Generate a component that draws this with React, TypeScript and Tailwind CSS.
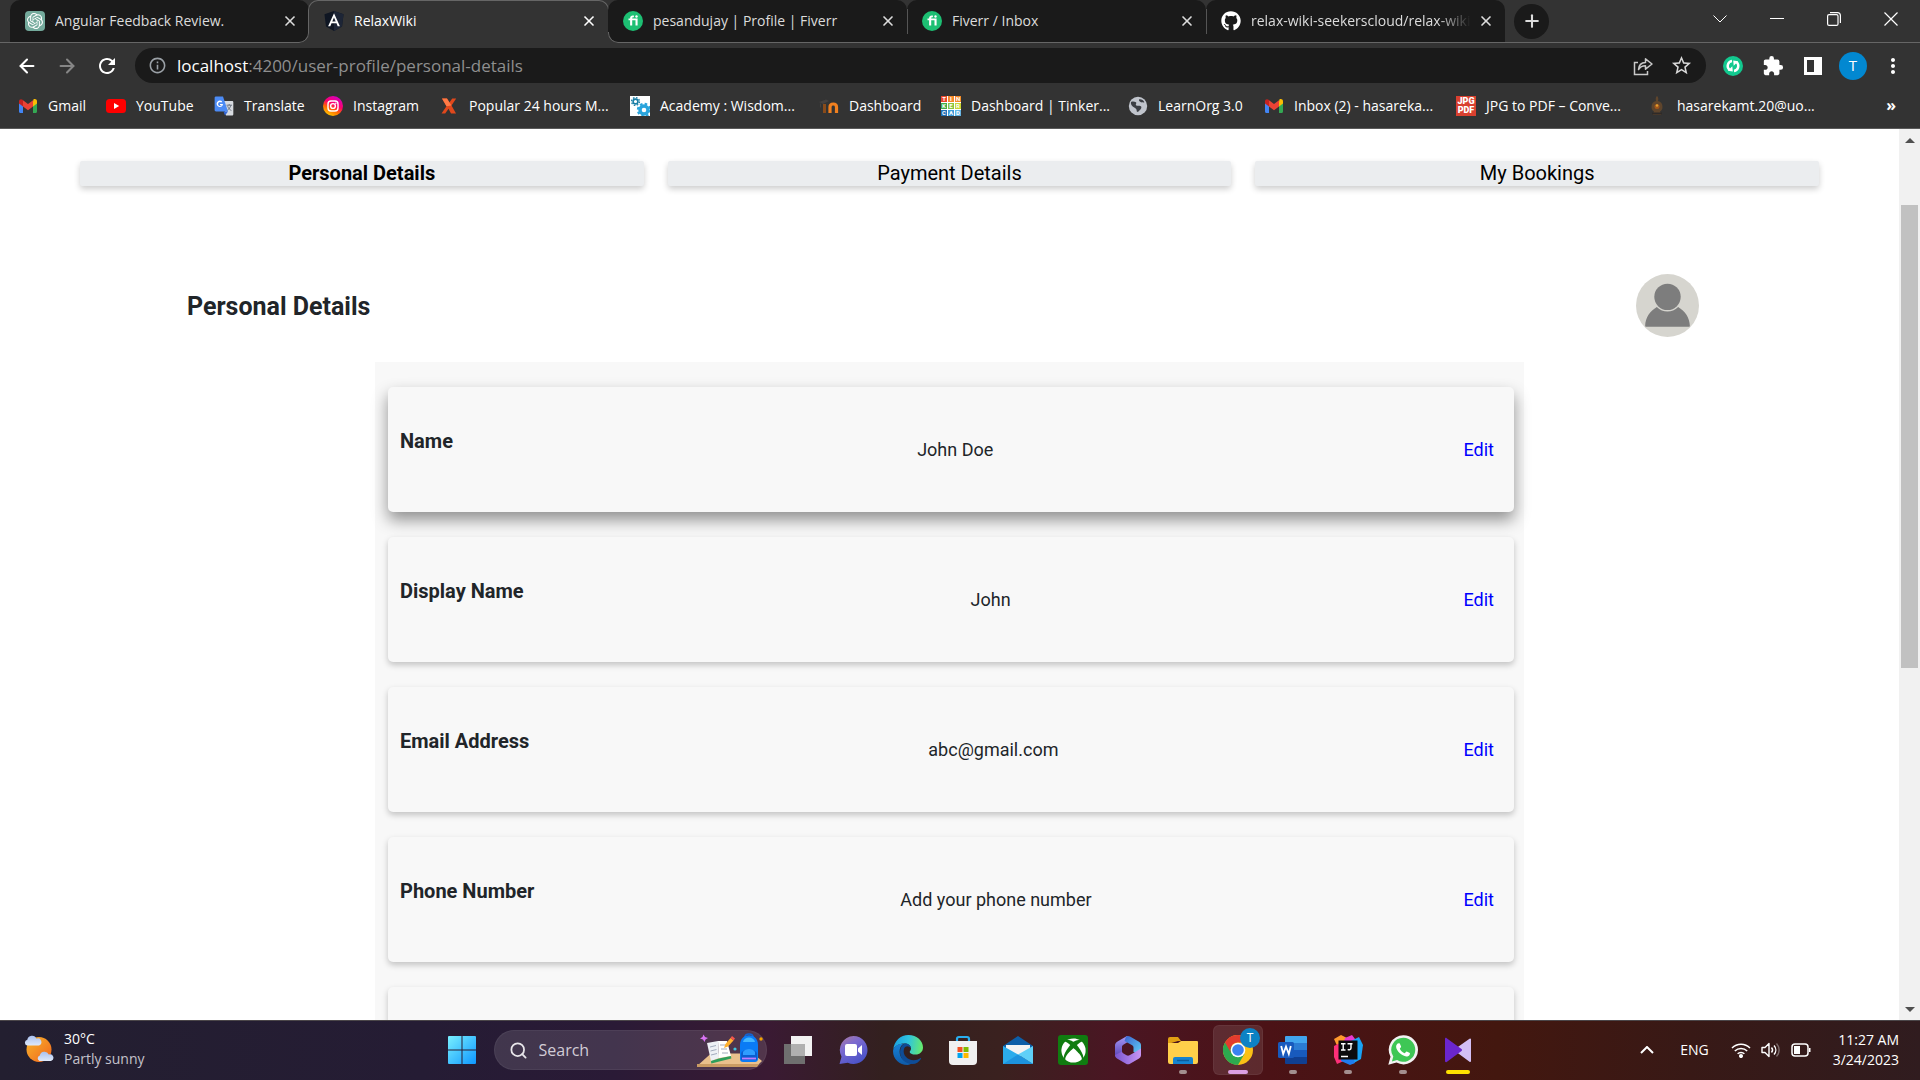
import type { ReactNode } from "react";
import { ArrowLeft, ArrowRight, Plus, Search, X } from "lucide-react";
import { FaGithub, FaXbox } from "react-icons/fa";
import { MdExtension, MdMoreVert, MdRefresh, MdStarBorder, MdInfoOutline } from "react-icons/md";
import { SiOpenai } from "react-icons/si";

/* ---------- favicons ---------- */

const OpenAiIcon = () => (
  <span className="flex size-5 items-center justify-center rounded-[4px] bg-[#74aa9c] text-white">
    <SiOpenai size={16} />
  </span>
);

const AngularIcon = () => (
  <svg viewBox="0 0 20 20" className="size-5">
    <path d="M10 0 19.5 3.3 18 15.6 10 20 2 15.6.5 3.3z" fill="#0f1623" />
    <path d="M10 0 19.5 3.3 18 15.6 10 20z" fill="#1d2536" />
    <path d="M10 2.3 4.1 15.3h2.2l1.2-3h5l1.2 3h2.2zm1.7 8.2H8.3L10 6.4z" fill="#fff" />
  </svg>
);

const FiverrIcon = () => (
  <svg viewBox="0 0 20 20" className="size-5">
    <circle cx="10" cy="10" r="10" fill="#1dbf73" />
    <path
      d="M14.6 14.5h-2.1V9.2H9.2v5.3H7.1V9.2H5.5V7.4h1.6v-.5C7.1 5.400 8.200 4.500 9.700 4.500h1.200v1.700H10c-.5 0-.8.3-.8.8v.4h5.400z"
      fill="#fff"
    />
    <circle cx="13.500" cy="5.500" r="1.200" fill="#fff" />
  </svg>
);

const GmailIcon = () => (
  <svg viewBox="0 0 20 20" className="size-5">
    <path d="M1 5v10.500c0 .8.6 1.500 1.400 1.500H5V8.500z" fill="#4285f4" />
    <path d="M19 5v10.500c0 .8-.6 1.500-1.400 1.500H15V8.500z" fill="#34a853" />
    <path d="M15 5.500v5L19 7.500V5.200C19 3.200 16.800 2.400 15.400 3.500z" fill="#fbbc04" />
    <path d="M5 10.500V4.200l5 3.800 5-3.800v6.300l-5 3.800z" fill="#ea4335" />
    <path d="M1 5.200v2.300l4 3V4.200l-.4-.4C3.200 2.500 1 3.200 1 5.200z" fill="#c5221f" />
  </svg>
);

const YouTubeIcon = () => (
  <svg viewBox="0 0 20 20" className="size-5">
    <rect y="3" width="20" height="14" rx="3.500" fill="#f00" />
    <path d="m8 7 5.200 3L8 13z" fill="#fff" />
  </svg>
);

const TranslateIcon = () => (
  <svg viewBox="0 0 20 20" className="size-5">
    <path d="M8 5h10c.8 0 1.300.5 1.300 1.300v12c0 .8-.5 1.300-1.300 1.300h-6z" fill="#d8dbe0" />
    <path d="M2 .5h7l5 15H2c-.8 0-1.400-.6-1.400-1.400V1.900C.6 1.100 1.200.5 2 .5z" fill="#4c8bf5" />
    <path d="m9.500 15.500h4.500l-3 4z" fill="#3367d6" />
    <path d="M9 8H6v1.200h1.700A2 2 0 1 1 7.300 6.500l.9-.9A3.200 3.200 0 1 0 9 8z" fill="#fff" />
    <path d="M12.500 9.200h5.500M15.200 8v1.200m1.600 0c-.5 2.500-2 4-3.300 5m.2-4c.7 2 2 3.500 3.700 4.300" stroke="#6b7380" fill="none" />
  </svg>
);

const InstagramIcon = () => (
  <svg viewBox="0 0 20 20" className="size-5">
    <defs>
      <linearGradient id="insta" x1="0.200" y1="1" x2="0.700" y2="0">
        <stop offset="0" stopColor="#ffd600" />
        <stop offset="0.350" stopColor="#ff6a00" />
        <stop offset="0.600" stopColor="#ff0169" />
        <stop offset="1" stopColor="#d300c5" />
      </linearGradient>
    </defs>
    <circle cx="10" cy="10" r="10" fill="url(#insta)" />
    <rect x="5" y="5" width="10" height="10" rx="3" fill="none" stroke="#fff" strokeWidth="1.400" />
    <circle cx="10" cy="10" r="2.400" fill="none" stroke="#fff" strokeWidth="1.400" />
    <circle cx="12.800" cy="7.200" r=".8" fill="#fff" />
  </svg>
);

const XIcon = () => (
  <svg viewBox="0 0 20 20" className="size-5">
    <path d="M3 2.500h5l2.200 4.300 3-4.300h4L12.500 9.500l4.500 8h-5l-2.500-4.700-3.300 4.700H2.500l5-7.300z" fill="#e0481c" />
    <path d="M7.500 10.200 3 2.500h5l4.500 7z" fill="#ff7a45" />
  </svg>
);

const GearsIcon = () => (
  <svg viewBox="0 0 20 20" className="size-5">
    <rect width="20" height="20" fill="#fff" />
    <circle cx="5.500" cy="5.500" r="2.400" fill="none" stroke="#1b7fa6" strokeWidth="1.600" />
    <circle cx="5.500" cy="5.500" r="3.900" fill="none" stroke="#1b7fa6" strokeWidth="1.400" strokeDasharray="1.600 1.460" />
    <circle cx="14" cy="14" r="4" fill="none" stroke="#29a4dc" strokeWidth="3.400" />
    <circle cx="14" cy="14" r="6.200" fill="none" stroke="#29a4dc" strokeWidth="2" strokeDasharray="2.600 2.260" />
  </svg>
);

const MoodleIcon = () => (
  <svg viewBox="0 0 20 20" className="size-5">
    <path d="M0 6 7 3.500l3 1.500-6 3z" fill="#454140" />
    <path d="M1.500 7.500v4" stroke="#454140" />
    <path d="M5.500 8v9" stroke="#8a4b1a" strokeWidth="3" />
    <path d="M11 17v-6c0-4 6.500-4 6.500 0v6" stroke="#f08020" strokeWidth="3.200" fill="none" />
  </svg>
);

const tiles = [
  ["T", "#e8472b"], ["I", "#f5882a"], ["N", "#f5882a"],
  ["K", "#3fae49"], ["E", "#8bc53f"], ["R", "#c9d534"],
  ["C", "#1f6fb5"], ["A", "#3d9bd9"], ["D", "#62b5e5"],
];

const TinkercadIcon = () => (
  <span aria-hidden="true" className="grid size-5 grid-cols-3 grid-rows-3 gap-px overflow-hidden bg-white text-center font-['Roboto'] text-[6px] leading-[6px] font-bold text-white">
    {tiles.map(([letter, color]) => (
      <span key={letter} style={{ backgroundColor: color }}>{letter}</span>
    ))}
  </span>
);

const GlobeIcon = () => (
  <svg viewBox="0 0 20 20" className="size-5">
    <circle cx="10" cy="10" r="9.200" fill="#c0c4cc" />
    <path d="M3 6c2-.8 3.500-.2 5 .2 1 1.300-1 2 .3 3.200 1.500.8 4-.4 5 1.300.6 2-1.500 2.800-2.600 4.600-.8 1-2 .9-2-.5 0-2-1.300-2.500-2.500-3.300C4.600 10.500 2.500 9 3 6zM11 3.500c2-.6 4.500.8 5.400 2.700-1.200.6-2.200-.2-3.200.2-1.200-.7-2.600-1.500-2.200-2.900z" fill="#3b3e44" />
  </svg>
);

const JpgPdfIcon = () => (
  <span aria-hidden="true" className="flex size-5 flex-col justify-center bg-[#d9402f] text-center font-['Roboto'] text-[9px] leading-[9px] font-black text-white">
    <span>JPG</span>
    <span>PDF</span>
  </span>
);

const CrestIcon = () => (
  <svg viewBox="0 0 20 20" className="size-5">
    <path d="M10 0c1.500 1 1.500 3 1 5 3 .5 4.500 3 4.500 6 0 2-1 3.500-2.500 4.500l1.500 3.500h-9L7 15.500C5.500 14.500 4.500 13 4.500 11c0-3 1.500-5.500 4.500-6-.5-2-.5-4 1-5z" fill="#5f452c" />
    <circle cx="10" cy="10.500" r="2.500" fill="#a3561a" />
    <circle cx="10" cy="9.500" r="1.200" fill="#e0a030" />
    <path d="M5 16.500h10v2H5z" fill="#2e2a28" />
  </svg>
);

/* ---------- browser chrome ---------- */

const tabs: { title: string; icon: ReactNode }[] = [
  { title: "Angular Feedback Review.", icon: <OpenAiIcon /> },
  { title: "RelaxWiki", icon: <AngularIcon /> },
  { title: "pesandujay | Profile | Fiverr", icon: <FiverrIcon /> },
  { title: "Fiverr / Inbox", icon: <FiverrIcon /> },
  { title: "relax-wiki-seekerscloud/relax-wiki", icon: <FaGithub size={20} color="#fff" /> },
];

const ACTIVE = 1;

function tabShape(i: number) {
  if (i === ACTIVE) return "bg-[#333333] text-white";
  if (i === ACTIVE - 1) return "rounded-t-[10px] rounded-br-[10px] bg-[#1a1a1a] text-[#dcdcdc]";
  if (i === ACTIVE + 1) return "rounded-t-[10px] rounded-bl-[10px] bg-[#1a1a1a] text-[#dcdcdc]";
  return "rounded-t-[10px] bg-[#1a1a1a] text-[#dcdcdc]";
}

function TabStrip() {
  return (
    <div className="flex h-[43px] shrink-0 bg-[#333333]">
      <div className="w-[10px] shrink-0 border-b border-[#666666]" />
      {tabs.map((t, i) => (
        <div key={t.title} className={`relative flex w-[299px] min-w-0 items-center pr-[10px] pb-[2px] pl-[15px] ${tabShape(i)}`}>
          {i === ACTIVE && (
            <span className="absolute -inset-x-px top-0 bottom-[10px] rounded-t-[10px] border-x border-t border-[#666666]" />
          )}
          {i === ACTIVE - 1 && (
            <span className="absolute inset-x-0 bottom-0 h-[11px] rounded-br-[10px] border-r border-b border-[#666666]" />
          )}
          {i === ACTIVE + 1 && (
            <span className="absolute inset-x-0 bottom-0 h-[11px] rounded-bl-[10px] border-b border-l border-[#666666]" />
          )}
          {i > ACTIVE + 1 && (
            <>
              <span className="absolute inset-x-0 bottom-0 border-b border-[#666666]" />
              <span className="absolute top-[9px] bottom-[9px] left-0 border-l border-[#555555]" />
            </>
          )}
          <button className="flex min-w-0 flex-1 items-center gap-[10px] text-left">
            <span className="shrink-0">{t.icon}</span>
            <span
              className={`flex-1 overflow-hidden text-sm whitespace-nowrap ${
                i === 4 ? "[mask-image:linear-gradient(90deg,#000_85%,transparent)]" : ""
              }`}
            >
              {t.title}
            </span>
          </button>
          <button aria-label={`Close ${t.title}`} className="ml-[6px] flex size-[18px] items-center justify-center">
            <X size={16} strokeWidth={2.5} />
          </button>
        </div>
      ))}
      <div className="flex flex-1 items-center border-b border-[#666666] pr-px pl-[9px]">
        <button aria-label="New tab" className="flex size-[35px] items-center justify-center rounded-full bg-[#1a1a1a] text-[#dcdcdc]">
          <Plus size={20} strokeWidth={2.5} />
        </button>
        <div className="ml-auto flex h-[38px] self-start text-white">
          <button aria-label="Search tabs" className="flex w-[57px] items-center justify-center">
            <svg viewBox="0 0 14 8" className="h-2 w-[14px]" fill="none" stroke="currentColor"><path d="m.5.500 6.500 6.500L13.500.5" /></svg>
          </button>
          <button aria-label="Minimize" className="flex w-[57px] items-center justify-center">
            <svg viewBox="0 0 14 2" className="h-[2px] w-[14px]"><path d="M0 0h14v1H0z" fill="currentColor" /></svg>
          </button>
          <button aria-label="Restore" className="flex w-[57px] items-center justify-center">
            <svg viewBox="0 0 14 14" className="size-[14px]" fill="none" stroke="currentColor" strokeWidth="1.200">
              <rect x=".6" y="2.600" width="10.400" height="10.800" rx="1.500" />
              <path d="M3 .6h7.500a3 3 0 0 1 2.900 2.900V11" />
            </svg>
          </button>
          <button aria-label="Close window" className="flex w-[57px] items-center justify-center">
            <svg viewBox="0 0 14 14" className="size-[14px]" fill="none" stroke="currentColor" strokeWidth="1.200"><path d="m.5.500 13 13M13.500.5l-13 13" /></svg>
          </button>
        </div>
      </div>
    </div>
  );
}

function Toolbar() {
  const btn = "flex w-10 shrink-0 items-center justify-center";
  return (
    <div className="flex h-[45px] shrink-0 items-center bg-[#333333] px-[7px] text-white">
      <button aria-label="Back" className={btn}><ArrowLeft size={22} strokeWidth={2.250} /></button>
      <button aria-label="Forward" className={`${btn} text-[#868686]`}><ArrowRight size={22} strokeWidth={2.250} /></button>
      <button aria-label="Reload" className={btn}><MdRefresh size={24} /></button>
      <div className="mr-[7px] ml-2 flex h-[35px] flex-1 items-center rounded-full bg-[#1a1a1a] pr-[5px] pl-[13px]">
        <button aria-label="Site information" className="text-[#9aa0a6]"><MdInfoOutline size={19} /></button>
        <label className="ml-[10px] flex flex-1 items-center text-[17px]">
          <span>localhost</span>
          <input aria-label="Address" className="min-w-0 flex-1 bg-transparent text-[#8f8f8f] outline-none" defaultValue=":4200/user-profile/personal-details" />
        </label>
        <button aria-label="Share" className="flex w-[39px] justify-center text-[#c8c8c8]">
          <svg viewBox="0 0 20 20" className="size-5" fill="none" stroke="currentColor" strokeWidth="1.500">
            <path d="M5 6.500H1.500v12h13V15" />
            <path d="M5.500 13.500c.3-4.500 2.700-6.800 7-7V2.800L19 8l-6.500 5.200V9.700c-3.300 0-5.400 1.200-7 3.800z" strokeLinejoin="round" />
          </svg>
        </button>
        <button aria-label="Bookmark this page" className="flex w-[39px] justify-center text-[#d8d8d8]"><MdStarBorder size={23} /></button>
      </div>
      <button aria-label="Sync extension" className={btn}>
        <svg viewBox="0 0 20 20" className="size-5">
          <circle cx="10" cy="10" r="10" fill="#12c98f" />
          <path d="M9 5A5 5 0 0 0 6.500 13.800" stroke="#fff" strokeWidth="2.400" fill="none" />
          <path d="M11 15A5 5 0 0 0 13.500 6.200" stroke="#fff" strokeWidth="2.400" fill="none" />
          <path d="m4.800 14.800 5 .6L9.300 10.300zM15.200 5.200l-5-.6.500 5.100z" fill="#fff" />
        </svg>
      </button>
      <button aria-label="Extensions" className={btn}><MdExtension size={22} /></button>
      <button aria-label="Side panel" className={btn}>
        <svg viewBox="0 0 18 18" className="size-[18px]"><path d="M0 0h18v18H0zM3 3v12h7V3z" fill="#fff" fillRule="evenodd" /></svg>
      </button>
      <button aria-label="Profile" className={btn}>
        <span className="flex size-7 items-center justify-center rounded-full bg-[#0288d1] text-[15px]">T</span>
      </button>
      <button aria-label="Menu" className={btn}><MdMoreVert size={24} /></button>
    </div>
  );
}

const bookmarks: { label: string; icon: ReactNode; width: string }[] = [
  { label: "Gmail", icon: <GmailIcon />, width: "w-[88px]" },
  { label: "YouTube", icon: <YouTubeIcon />, width: "w-[108px]" },
  { label: "Translate", icon: <TranslateIcon />, width: "w-[109px]" },
  { label: "Instagram", icon: <InstagramIcon />, width: "w-[116px]" },
  { label: "Popular 24 hours M...", icon: <XIcon />, width: "w-[191px]" },
  { label: "Academy : Wisdom...", icon: <GearsIcon />, width: "w-[189px]" },
  { label: "Dashboard", icon: <MoodleIcon />, width: "w-[122px]" },
  { label: "Dashboard | Tinker...", icon: <TinkercadIcon />, width: "w-[187px]" },
  { label: "LearnOrg 3.0", icon: <GlobeIcon />, width: "w-[136px]" },
  { label: "Inbox (2) - hasareka...", icon: <GmailIcon />, width: "w-[192px]" },
  { label: "JPG to PDF – Conve...", icon: <JpgPdfIcon />, width: "w-[191px]" },
  { label: "hasarekamt.20@uo...", icon: <CrestIcon />, width: "w-[180px]" },
];

function Bookmarks() {
  return (
    <nav aria-label="Bookmarks" className="flex h-[41px] shrink-0 items-center border-b border-[#5a5a5a] bg-[#333333] pb-1 pl-[18px] text-sm text-white">
      {bookmarks.map((b, i) => (
        <a key={i} href="#" className={`flex shrink-0 items-center gap-[10px] whitespace-nowrap ${b.width}`}>
          <span className="shrink-0">{b.icon}</span>
          {b.label}
        </a>
      ))}
      <button aria-label="More bookmarks" className="mr-[24px] ml-auto pb-[3px] text-base font-bold">»</button>
    </nav>
  );
}

/* ---------- web page ---------- */

const sections = ["Personal Details", "Payment Details", "My Bookings"];

const details = [
  { label: "Name", value: "John Doe" },
  { label: "Display Name", value: "John" },
  { label: "Email Address", value: "abc@gmail.com" },
  { label: "Phone Number", value: "Add your phone number" },
];

function ProfilePage() {
  return (
    <main className="min-w-0 flex-1 overflow-hidden bg-white px-20 pt-8 font-['Roboto',sans-serif] text-[#212529]">
      <nav aria-label="Profile sections" className="grid grid-cols-3 gap-6">
        {sections.map((s, i) => (
          <a
            key={s}
            href="#"
            className={`rounded-[2px] bg-[#ebedef] text-center text-xl leading-[25px] text-black shadow-[0_3px_6px_rgba(0,0,0,0.2)] ${i === 0 ? "font-bold" : ""}`}
          >
            {s}
          </a>
        ))}
      </nav>

      <header className="mt-[88px] flex items-center justify-between pr-[120px] pl-[107px]">
        <h1 className="pt-[2px] text-[25px] leading-8 font-bold">Personal Details</h1>
        <svg viewBox="0 0 62 62" className="size-[63px]" role="img" aria-label="Profile picture">
          <circle cx="31" cy="31" r="31" fill="#d6d5cf" />
          <path d="M9 51c.3-8 4.800-14.500 11.500-18.500 6 6 15 6 21 0C48.200 36.500 52.700 43 53 51c0 .8-.4 1-1 1H10c-.6 0-1-.2-1-1z" fill="#7d7d7d" />
          <circle cx="31" cy="22.500" r="13" fill="#7d7d7d" />
        </svg>
      </header>

      <section className="mx-[295px] mt-[25px] flex flex-col gap-[25px] bg-[#f8f8f8] pt-[25px] pr-[10px] pb-[25px] pl-[13px]">
        {details.map((d, i) => (
          <article
            key={d.label}
            className={`flex h-[125px] shrink-0 items-center justify-between rounded-[5px] bg-[#f8f8f8] pr-[14px] pl-3 ${
              i === 0 ? "shadow-[0_8px_16px_rgba(0,0,0,0.42)]" : "shadow-[0_3px_6px_rgba(0,0,0,0.22)]"
            }`}
          >
            <h2 className="pb-[18px] text-xl leading-6 font-bold">{d.label}</h2>
            <p className="text-lg">{d.value}</p>
            <button aria-label={`Edit ${d.label}`} className="px-[6px] text-lg text-[#0000ff]">Edit</button>
          </article>
        ))}
        <article className="h-[125px] shrink-0 rounded-[5px] bg-[#f8f8f8] shadow-[0_3px_6px_rgba(0,0,0,0.22)]" />
      </section>
    </main>
  );
}

function Scrollbar() {
  return (
    <div className="flex w-[21px] shrink-0 flex-col items-center bg-[#f1f1f1]">
      <button aria-label="Scroll up" className="flex h-[22px] w-full items-center justify-center">
        <svg viewBox="0 0 10 5" className="h-[5px] w-[10px]"><path d="M0 5 5 0l5 5z" fill="#505050" /></svg>
      </button>
      <div className="flex-1 pt-[54px]">
        <div className="h-[463px] w-[17px] bg-[#c1c1c1]" />
      </div>
      <button aria-label="Scroll down" className="flex h-[22px] w-full items-center justify-center">
        <svg viewBox="0 0 10 5" className="h-[5px] w-[10px]"><path d="m0 0 5 5 5-5z" fill="#505050" /></svg>
      </button>
    </div>
  );
}

/* ---------- taskbar ---------- */

const Icon = ({ children }: { children: ReactNode }) => (
  <svg viewBox="0 0 30 30" className="size-[30px]">{children}</svg>
);

const WeatherIcon = () => (
  <svg viewBox="0 0 30 30" className="size-[30px]">
    <defs>
      <linearGradient id="sun" x1="0" y1="0" x2="1" y2="1">
        <stop offset="0" stopColor="#f8b62b" />
        <stop offset="1" stopColor="#f0641e" />
      </linearGradient>
      <linearGradient id="cloud" x1="0" y1="0" x2="0" y2="1">
        <stop offset="0" stopColor="#a9c1f0" />
        <stop offset="1" stopColor="#dfe9fa" />
      </linearGradient>
    </defs>
    <circle cx="15" cy="15.500" r="12.500" fill="url(#sun)" />
    <path d="M3 11.500a3 3 0 0 1 .3-5.800 4.800 4.800 0 0 1 9.200-1 3.500 3.500 0 0 1 2.500 6.800z" fill="url(#cloud)" />
    <path d="M15.500 27a3 3 0 0 1 .3-5.600 4.800 4.800 0 0 1 9-1 3.400 3.400 0 0 1 2.200 6.600z" fill="url(#cloud)" />
  </svg>
);

const StartIcon = () => (
  <Icon>
    <defs>
      <linearGradient id="win" x1="0" y1="0" x2="30" y2="30" gradientUnits="userSpaceOnUse">
        <stop offset="0" stopColor="#7df3ff" />
        <stop offset="1" stopColor="#0a93ff" />
      </linearGradient>
    </defs>
    <path d="M2 1h12.500v13.500H1V2a1 1 0 0 1 1-1zM15.500 1H28a1 1 0 0 1 1 1v12.500H15.500zM1 15.500h13.500V29H2a1 1 0 0 1-1-1zM15.500 15.500H29V28a1 1 0 0 1-1 1H15.500z" fill="url(#win)" />
  </Icon>
);

const StudyIllustration = () => (
  <svg viewBox="0 0 66 34" className="h-[34px] w-[66px]">
    <path d="M14 20.500h42L65 28l-5 5H0z" fill="#e9c08c" />
    <path d="M0 31h62l-2 3H0z" fill="#c99b63" />
    <path d="m10 10 11-2 1 17-8 3z" fill="#eef0f5" />
    <path d="m21 8 9 0 4 15-12 2z" fill="#fff" />
    <path d="m14 28 8-2.500 12-2.500.3 2.500-20 5z" fill="#2e9e5b" />
    <path d="m13 14 6-1.500M13.500 18l6-1.500M14 22l6-1.500M23 12h6M24 16h6M25 20h6" stroke="#9aa3b5" strokeWidth=".9" />
    <path d="m27 15 1.500-4 5-6 3 2.500-5.500 6z" fill="#ffb02e" />
    <path d="m33.500 5 1.500-2 3 2.500-1.500 2z" fill="#f4574d" />
    <path d="M6.500 1.500 8 4l3 1-2.500 1.500L7.500 9 6 6.500 3 5.500 5.500 4z" fill="#d974f5" />
    <circle cx="38" cy="16" r="1.600" fill="#3fc3e0" />
    <circle cx="64" cy="6" r="1.700" fill="#f5a300" />
    <path d="M48 4c0-4 8-4 8 0" stroke="#1464d2" strokeWidth="1.600" fill="none" />
    <path d="M43 12c0-13 18-13 18 0v14c0 2-1.500 3-3 3H46c-2 0-3-1-3-3z" fill="#0a7bf5" />
    <path d="M46 9c1-6 11-6 12 0z" fill="#43b7ff" />
    <path d="M44 21c0-6 16-6 16 0v6H44z" fill="#0b5ed1" />
    <path d="M46 19c2-4 10-4 12 0v3H46z" fill="#2f9dff" />
    <path d="M45 25.500h14" stroke="#c17bff" strokeWidth="1.800" />
  </svg>
);

const TaskViewIcon = () => (
  <Icon>
    <path d="M8 1h21v20H8z" fill="#f2f2f2" />
    <path d="M1 9h21v20H1z" fill="#6f6f6f" />
    <path d="M8 9h14v12H8z" fill="#b0b0b0" />
  </Icon>
);

const ChatIcon = () => (
  <Icon>
    <defs>
      <linearGradient id="chat" x1="0" y1="0" x2=".6" y2="1">
        <stop offset="0" stopColor="#b07a9c" />
        <stop offset=".4" stopColor="#7c6ad0" />
        <stop offset="1" stopColor="#4b53c9" />
      </linearGradient>
    </defs>
    <path d="M15.500 1a14 14 0 1 1-5.700 26.800L1.500 29l2-7.300A14 14 0 0 1 15.500 1z" fill="url(#chat)" />
    <rect x="7" y="9" width="12" height="12" rx="2" fill="#fff" />
    <path d="m20 13.500 4-3.500v10l-4-3.500z" fill="#fff" />
  </Icon>
);

const EdgeIcon = () => (
  <Icon>
    <defs>
      <linearGradient id="edgeA" x1="0" y1=".3" x2="1" y2=".4">
        <stop offset="0" stopColor="#1a9fe0" />
        <stop offset=".5" stopColor="#2fc3df" />
        <stop offset="1" stopColor="#66eb6e" />
      </linearGradient>
      <linearGradient id="edgeB" x1="0" y1="0" x2="0" y2="1">
        <stop offset="0" stopColor="#1683d8" />
        <stop offset="1" stopColor="#0f5aa8" />
      </linearGradient>
    </defs>
    <path d="M.3 14.500C1 6 7.500 0 15.500 0 24 0 30 6 30 12.500c0 4.300-3.300 7-7.300 7-3.700 0-6-1.300-6-2.600 0-.9 1.300-1.400 1.300-3.500 0-2.900-2.900-5-6.400-5C6 8.400 1.500 11 .3 14.500z" fill="url(#edgeA)" />
    <path d="M.1 15.500c.6-4.300 5.300-7.100 11-7.100-3.400 1.800-4.500 5-4.500 8.100C6.600 24 13 28.500 20 27.500c-1.800 1.500-3.800 2.500-5.500 2.500C6 30-.5 23.500.1 15.500z" fill="url(#edgeB)" />
    <path d="M11 14c-1.800 6 3.500 11.200 9.700 11.200 2.600 0 4.600-.8 6.500-2 .6-.4 1 .2.700.7C26 27 23 29 19.500 29 12 29 7 23.500 7 17c0-3.500 1.500-7 4.600-8.500 3.500 0 6.400 2 6.400 4.900C16 10.500 12 10.500 11 14z" fill="#0e4c96" />
  </Icon>
);

const StoreIcon = () => (
  <Icon>
    <path d="M9 7V4a2 2 0 0 1 2-2h8a2 2 0 0 1 2 2v3" fill="none" stroke="#29aef0" strokeWidth="2.200" />
    <path d="M1 6h28v20a4 4 0 0 1-4 4H5a4 4 0 0 1-4-4z" fill="#f0f0f0" />
    <path d="M9.500 12h5v5h-5z" fill="#f25022" />
    <path d="M15.500 12h5v5h-5z" fill="#7fba00" />
    <path d="M9.500 18h5v5h-5z" fill="#00a4ef" />
    <path d="M15.500 18h5v5h-5z" fill="#ffb900" />
  </Icon>
);

const MailIcon = () => (
  <Icon>
    <path d="M0 11 15 1l15 10v6H0z" fill="#0c5ea8" />
    <path d="M3 10h24v6L15 22 3 16z" fill="#f3f3f3" />
    <path d="M0 11v18h30L15 19.500z" fill="#2bacec" />
    <path d="M30 11v18L15 19.500z" fill="#5fd0f8" />
    <path d="M0 29 15 19.500 30 29z" fill="#1d93de" />
  </Icon>
);

const XboxIcon = () => (
  <span className="flex size-[30px] items-center justify-center rounded-[3px] bg-[#107c10] text-white">
    <FaXbox size={25} />
  </span>
);

const M365Icon = () => (
  <Icon>
    <defs>
      <linearGradient id="m365a" x1="0" y1="0" x2="0" y2="1">
        <stop offset="0" stopColor="#a79af5" />
        <stop offset="1" stopColor="#5b45b8" />
      </linearGradient>
      <linearGradient id="m365b" x1="0" y1="0" x2="1" y2="1">
        <stop offset="0" stopColor="#3b62cf" />
        <stop offset="1" stopColor="#62d4f7" />
      </linearGradient>
      <linearGradient id="m365c" x1="0" y1="0" x2="1" y2="0">
        <stop offset="0" stopColor="#7a56cf" />
        <stop offset="1" stopColor="#c795f5" />
      </linearGradient>
    </defs>
    <path d="M14 1 4.500 6.500C3 7.400 2 8.800 2 10.500v11l7-3.500v-6c0-1 .5-1.800 1.300-2.300L18 5z" fill="url(#m365a)" />
    <path d="M13 1.500c1.300-.8 2.700-.8 4 0l9 5.200c1.300.8 2 2 2 3.500V20l-7.500-3v-4.500c0-1-.5-1.800-1.300-2.300L11.500 6z" fill="url(#m365b)" />
    <path d="M2 20 9 16.500c.2 1 .7 1.600 1.500 2l3 1.800c1 .5 2 .5 3 0l4-2.300 7.500-4.500V20c0 1.500-.7 2.700-2 3.500l-9 5.200c-1.300.7-2.700.7-4 0l-9-5.200C2.700 22.700 2 21.500 2 20z" fill="url(#m365c)" />
  </Icon>
);

const ExplorerIcon = () => (
  <Icon>
    <path d="M0 4a2 2 0 0 1 2-2h8l3 4h-3L0 9z" fill="#e0a013" />
    <path d="M0 8h10l3-2h16a1 1 0 0 1 1 1v20a2 2 0 0 1-2 2H2a2 2 0 0 1-2-2z" fill="#ffd04a" />
    <path d="M5 29v-5a2 2 0 0 1 2-2h16a2 2 0 0 1 2 2v5z" fill="#1583d0" />
    <path d="M9 25.500h12" stroke="#0c5c9c" strokeWidth="1.400" />
  </Icon>
);

const ChromeIcon = () => (
  <span className="relative">
    <Icon>
      <circle cx="15" cy="15" r="15" fill="#fbc116" />
      <path d="M15 15 2 7.500A15 15 0 0 0 15 30l6.500-11.200z" fill="#2da94f" />
      <path d="M2 7.500A15 15 0 0 1 28 7.500H15A7.500 7.500 0 0 0 8.500 18.800z" fill="#e33b2e" />
      <circle cx="15" cy="15" r="7.300" fill="#fff" />
      <circle cx="15" cy="15" r="5.800" fill="#3b82f0" />
    </Icon>
    <span className="absolute -top-[7px] -right-[7px] flex size-5 items-center justify-center rounded-full bg-[#0c82c4] text-xs text-white">T</span>
  </span>
);

const WordIcon = () => (
  <Icon>
    <path d="M8 1h20a1 1 0 0 1 1 1v6H7V2a1 1 0 0 1 1-1z" fill="#41a5ee" />
    <path d="M7 8h22v7H7z" fill="#2b7cd3" />
    <path d="M7 15h22v7H7z" fill="#185abd" />
    <path d="M7 22h22v6a1 1 0 0 1-1 1H8a1 1 0 0 1-1-1z" fill="#103f91" />
    <rect x="0" y="7" width="16" height="16" rx="1.500" fill="#185abd" />
    <path d="m3.200 11 2 8 2.800-7.500L10.800 19l2-8" stroke="#fff" strokeWidth="1.800" fill="none" />
  </Icon>
);

const IntelliJIcon = () => (
  <Icon>
    <path d="m1 4 7-4 6 3-8 12z" fill="#ff9a2e" />
    <path d="M12 3 19 0l6 8-3 8H8z" fill="#e83ad0" />
    <path d="m18 6 8-4 4 8-2 14-9 5z" fill="#18a3f5" />
    <path d="m1 11 8-4 4 18-9 4-3-7z" fill="#fe2f78" />
    <path d="m8 20 12 2 2 6-5 2-9-4z" fill="#1f7df0" />
    <path d="M5.500 5.500h19v19h-19z" fill="#0b0b0d" />
    <path d="M8 21.500h7" stroke="#fff" strokeWidth="1.500" />
    <path d="M8 8.700h4.500M10.200 8.700V15M8 15h4.500M14.500 8.700h5M18 8.700V13c0 1.700-1.800 2.200-3.300 1.300" stroke="#fff" strokeWidth="1.400" fill="none" />
  </Icon>
);

const WhatsAppIcon = () => (
  <Icon>
    <path d="M15.300.3A14.500 14.500 0 0 1 30 14.800 14.500 14.500 0 0 1 8.500 27.600L.3 29.800l2.200-8A14.500 14.500 0 0 1 15.300.3z" fill="#f3f3f3" />
    <path d="M15.300 2.800a12 12 0 1 1-6.200 22.300l-5.200 1.300 1.400-5A12 12 0 0 1 15.300 2.800z" fill="#3ec755" />
    <path d="M10.800 8.300c.5 0 .9 0 1.200.7l1.100 2.600c.2.600-1.200 1.900-1.300 2.200 1 2 2.700 3.500 4.900 4.500.4-.1 1.500-1.900 2-1.800l2.700 1.300c.6.300.6.500.5 1.100-.4 1.900-2.100 2.600-3.600 2.600-4.300-.2-10.200-5.600-10.200-9.900 0-1.400 1-3.300 2.700-3.300z" fill="#fff" />
  </Icon>
);

const KiteIcon = () => (
  <Icon>
    <path d="M28 4v22a1 1 0 0 1-1.500.8L12 16v-2L26.500 3.700A1 1 0 0 1 28 4z" fill="#d3bff5" />
    <path d="M2 4v22c0 1 .8 1.500 1.700.9L18.500 16c.7-.5.7-1.500 0-2L3.700 3.200C2.800 2.500 2 3 2 4z" fill="#6a26cd" />
  </Icon>
);

const apps: { name: string; icon: ReactNode; bar?: string; active?: boolean }[] = [
  { name: "Task view", icon: <TaskViewIcon /> },
  { name: "Chat", icon: <ChatIcon /> },
  { name: "Edge", icon: <EdgeIcon /> },
  { name: "Store", icon: <StoreIcon /> },
  { name: "Mail", icon: <MailIcon /> },
  { name: "Xbox", icon: <XboxIcon /> },
  { name: "Microsoft 365", icon: <M365Icon /> },
  { name: "File Explorer", icon: <ExplorerIcon />, bar: "w-2 bg-[#a38f8f]" },
  { name: "Chrome", icon: <ChromeIcon />, bar: "w-5 bg-[#dc9fe2]", active: true },
  { name: "Word", icon: <WordIcon />, bar: "w-2 bg-[#a38f8f]" },
  { name: "IntelliJ IDEA", icon: <IntelliJIcon />, bar: "w-2 bg-[#a38f8f]" },
  { name: "WhatsApp", icon: <WhatsAppIcon />, bar: "w-2 bg-[#a38f8f]" },
  { name: "Visual Studio", icon: <KiteIcon />, bar: "w-6 bg-[#ffe100]" },
];

function Taskbar() {
  return (
    <footer className="grid h-[60px] shrink-0 grid-cols-[1fr_auto_1fr] items-center border-t border-[#4b4649] bg-[linear-gradient(90deg,#231f30_0%,#251c34_22%,#2a1a36_32%,#3a1a33_40%,#33201f_46%,#3a211f_52%,#4a1623_58%,#4b1216_66%,#43170f_78%,#381916_88%,#301c1f_100%)] pb-px text-white">
      <button className="flex items-center gap-[10px] pb-[2px] pl-[24px] text-left text-sm leading-5">
        <WeatherIcon />
        <span>
          <span className="block">30°C</span>
          <span className="block text-[#c5c2cb]">Partly sunny</span>
        </span>
      </button>

      <div className="flex h-full items-center">
        <button aria-label="Start" className="flex w-[55px] justify-center"><StartIcon /></button>
        <label className="mx-[4px] flex h-10 w-[273px] items-center rounded-full border border-white/5 bg-white/12 pr-[3px] pl-[14px]">
          <Search size={19} strokeWidth={2.250} className="text-[#e8e6ea]" />
          <input aria-label="Search" placeholder="Search" className="ml-[11px] min-w-0 flex-1 bg-transparent text-base outline-none placeholder:text-[#d2ccd6]" />
          <StudyIllustration />
        </label>
        {apps.map((a) => (
          <button key={a.name} aria-label={a.name} className="relative flex h-full w-[55px] items-center justify-center">
            <span className={`flex size-[50px] items-center justify-center rounded-[6px] ${a.active ? "border border-white/5 bg-white/10" : ""}`}>
              {a.icon}
            </span>
            {a.bar && <span className={`absolute bottom-[5px] left-1/2 h-1 -translate-x-1/2 rounded-full ${a.bar}`} />}
          </button>
        ))}
      </div>

      <div className="flex items-center justify-end pr-[21px] pb-px text-sm leading-5">
        <button aria-label="Show hidden icons" className="mr-[26px]">
          <svg viewBox="0 0 14 8" className="h-2 w-[14px]" fill="none" stroke="#fff" strokeWidth="2"><path d="m1 7 6-6 6 6" /></svg>
        </button>
        <button className="mr-[22px]">ENG</button>
        <button aria-label="Network, volume and battery" className="mr-[22px] flex items-center gap-[10px]">
          <svg viewBox="0 0 20 16" className="h-4 w-5" fill="none" stroke="#fff" strokeWidth="1.500">
            <path d="M1 6a12.700 12.700 0 0 1 18 0M3.800 9a8.800 8.800 0 0 1 12.400 0M6.600 11.800a4.800 4.800 0 0 1 6.800 0" />
            <circle cx="10" cy="14" r="1.300" fill="#fff" />
          </svg>
          <svg viewBox="0 0 20 16" className="h-4 w-5" fill="none" stroke="#fff" strokeWidth="1.400">
            <path d="M1 5.500h3l4-4v13l-4-4H1z" strokeLinejoin="round" />
            <path d="M10.500 5.500c1.200 1.400 1.200 3.600 0 5M13 3.500c2.400 2.600 2.400 6.400 0 9" />
            <path d="M15.500 1.500c3.500 3.800 3.500 9.200 0 13" opacity=".35" />
          </svg>
          <svg viewBox="0 0 20 14" className="h-[14px] w-5" fill="none" stroke="#fff" strokeWidth="1.500">
            <rect x="1" y="1" width="16" height="12" rx="3" />
            <path d="M3 3h6v8H3zM18 5h1.500v4H18z" fill="#fff" stroke="none" />
          </svg>
        </button>
        <button className="text-right whitespace-nowrap">
          <span className="block">11:27 AM</span>
          <span className="block">3/24/2023</span>
        </button>
      </div>
    </footer>
  );
}

export default function App() {
  return (
    <div className="flex h-screen flex-col overflow-hidden font-['Open_Sans','Noto_Sans',sans-serif]">
      <TabStrip />
      <Toolbar />
      <Bookmarks />
      <div className="flex min-h-0 flex-1">
        <ProfilePage />
        <Scrollbar />
      </div>
      <Taskbar />
    </div>
  );
}
